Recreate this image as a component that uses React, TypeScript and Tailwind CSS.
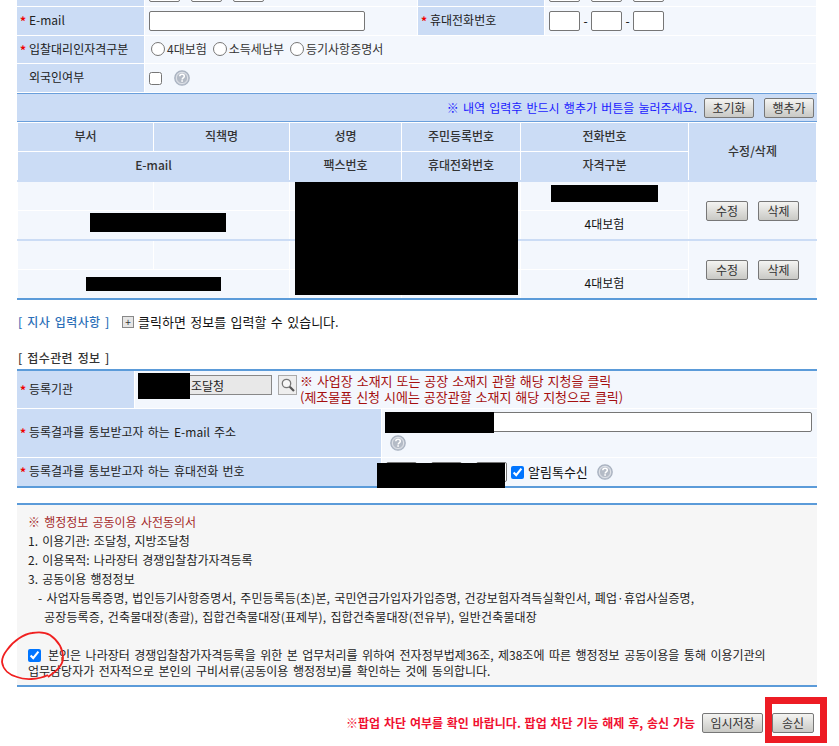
import type { ReactNode } from "react";

const font = "font-['Noto_Sans_CJK_KR','Liberation_Sans',sans-serif]";

function Star() {
  return <span className="absolute left-[3px] top-1/2 -translate-y-1/2 text-[12px] font-bold leading-none text-[#f00000]">*</span>;
}

function Label({ required, children, className = "" }: { required?: boolean; children?: ReactNode; className?: string }) {
  return (
    <div className={`relative flex items-center bg-[#cbdcf5] pb-[2px] pl-[12px] text-[#222] ${className}`}>
      {required && <Star />}
      {children}
    </div>
  );
}

function HeadCell({ children, className = "" }: { children: ReactNode; className?: string }) {
  return <div className={`flex items-center justify-center bg-[#cbdcf5] pb-[2px] ${className}`}>{children}</div>;
}

function TextBox({ className = "" }: { className?: string }) {
  return <div className={`h-[20px] rounded-[2px] border border-[#767676] bg-white ${className}`} />;
}

function Btn({ label, className = "" }: { label: string; className?: string }) {
  return (
    <button className={`h-[20px] rounded-[2px] border border-[#777] bg-linear-to-b from-[#f4f4f2] to-[#c9c9c5] text-[12px] leading-none text-[#333] ${className}`}>
      {label}
    </button>
  );
}

function Help({ className = "" }: { className?: string }) {
  return (
    <svg width="16" height="16" viewBox="0 0 16 16" className={`shrink-0 ${className}`}>
      <circle cx="8" cy="8" r="7.2" fill="#c6ccd6" stroke="#a9b2c0" strokeWidth="1.3" />
      <circle cx="8" cy="8" r="5.6" fill="#b4bbc6" stroke="#e6e9ee" strokeWidth="0.8" />
      <path d="M5.8 6.3c0-1.3 1-2 2.3-2s2.2.8 2.2 1.9c0 1.7-2.1 1.6-2.1 3.2" fill="none" stroke="#fff" strokeWidth="1.5" />
      <rect x="7.3" y="10.2" width="1.6" height="1.6" fill="#fff" />
    </svg>
  );
}

function Radio({ label }: { label: string }) {
  return (
    <label className="flex items-center gap-[2px]">
      <input type="radio" name="qualification" className="m-0 h-[14px] w-[14px]" />
      <span>{label}</span>
    </label>
  );
}

function Black({ className }: { className: string }) {
  return <div className={`absolute bg-black ${className}`} />;
}

function StaffRow() {
  return (
    <div className="grid h-[57px] grid-cols-[135px_135px_111px_118px_167px_127px] grid-rows-[28px_28px] gap-px bg-white">
      <div className="bg-[#f3f7fd]" />
      <div className="bg-[#f3f7fd]" />
      <div className="bg-[#f3f7fd]" />
      <div className="bg-[#f3f7fd]" />
      <div className="bg-[#f3f7fd]" />
      <div className="row-span-2 flex items-center justify-center gap-[10px] bg-[#f3f7fd]">
        <Btn label="수정" className="w-[42px]" />
        <Btn label="삭제" className="w-[41px]" />
      </div>
      <div className="col-span-2 bg-[#f3f7fd]" />
      <div className="bg-[#f3f7fd]" />
      <div className="bg-[#f3f7fd]" />
      <div className="flex items-center justify-center bg-[#f3f7fd] pb-[2px] text-[#111]">4대보험</div>
    </div>
  );
}

export default function App() {
  return (
    <div className="h-[746px] w-[839px] overflow-hidden bg-white">
      <div className={`relative ml-[17px] flow-root h-[746px] w-[800px] text-[12px] leading-[16px] [word-spacing:1.5px] ${font}`}>
        {/* applicant form, scrolled so the first row is cut off */}
        <div className="-mt-[22px] grid grid-cols-[127px_272px_126px_271px] grid-rows-[28px_28px_27px_28px] gap-px">
          <Label />
          <div className="flex items-center gap-[11px] bg-[#f3f7fd] pl-[4px]">
            <TextBox className="w-[31px]" />
            <TextBox className="w-[31px]" />
            <TextBox className="w-[31px]" />
          </div>
          <Label />
          <div className="flex items-center gap-[11px] bg-[#f3f7fd] pl-[4px]">
            <TextBox className="w-[31px]" />
            <TextBox className="w-[31px]" />
            <TextBox className="w-[31px]" />
          </div>

          <Label required>E-mail</Label>
          <div className="flex items-center bg-[#f3f7fd] pl-[4px]">
            <TextBox className="w-[216px]" />
          </div>
          <Label required>휴대전화번호</Label>
          <div className="flex items-center gap-[3px] bg-[#f3f7fd] pl-[4px]">
            <TextBox className="w-[31px]" />
            <span className="w-[5px] text-center">-</span>
            <TextBox className="w-[31px]" />
            <span className="w-[5px] text-center">-</span>
            <TextBox className="w-[31px]" />
          </div>

          <Label required>입찰대리인자격구분</Label>
          <div className="col-span-3 flex items-center gap-[6px] bg-[#f3f7fd] pb-[1px] pl-[6px] text-[#333]">
            <Radio label="4대보험" />
            <Radio label="소득세납부" />
            <Radio label="등기사항증명서" />
          </div>

          <Label>외국인여부</Label>
          <div className="col-span-3 flex items-center gap-[12px] bg-[#f3f7fd] pl-[4px]">
            <input type="checkbox" className="m-0 h-[13px] w-[13px]" />
            <Help />
          </div>
        </div>

        {/* notice bar */}
        <div className="mt-px flex h-[29px] items-center justify-end border-y border-[#6a9fdb] bg-[#cbdcf5] pr-[3px]">
          <span className="mr-[7px] text-[#1a1aff]">※ 내역 입력후 반드시 행추가 버튼을 눌러주세요.</span>
          <Btn label="초기화" className="mr-[10px] w-[50px]" />
          <Btn label="행추가" className="w-[50px]" />
        </div>

        {/* staff table */}
        <div className="relative ml-px">
          <div className="grid grid-cols-[135px_135px_111px_118px_167px_127px] grid-rows-[28px_28px] gap-px bg-white pt-px text-center font-medium text-[#333]">
            <HeadCell>부서</HeadCell>
            <HeadCell>직책명</HeadCell>
            <HeadCell>성명</HeadCell>
            <HeadCell>주민등록번호</HeadCell>
            <HeadCell>전화번호</HeadCell>
            <HeadCell className="row-span-2">수정/삭제</HeadCell>
            <HeadCell className="col-span-2">E-mail</HeadCell>
            <HeadCell>팩스번호</HeadCell>
            <HeadCell>휴대전화번호</HeadCell>
            <HeadCell>자격구분</HeadCell>
          </div>
          <div className="-ml-px h-[2px] bg-[#cbdcf5]" />
          <StaffRow />
          <div className="-ml-px h-[2px] bg-[#cbdcf5]" />
          <StaffRow />
          <div className="-ml-px h-[2px] bg-[#5b9bd9]" />
          <Black className="left-[72px] top-[91px] h-[19px] w-[136px]" />
          <Black className="left-[68px] top-[155px] h-[14px] w-[135px]" />
          <Black className="left-[277px] top-[60px] h-[113px] w-[223px]" />
          <Black className="left-[533px] top-[63px] h-[17px] w-[107px]" />
        </div>

        {/* branch section */}
        <div className="mt-[14px] flex items-center">
          <span className="ml-px w-[104px] font-medium tracking-[0.4px] text-[#2c6fb8]">[ 지사 입력사항 ]</span>
          <span className="flex h-[12px] w-[12px] items-center justify-center border border-[#888] bg-[#e6e6e6] text-[10px] leading-none text-[#333]">+</span>
          <span className="ml-[4px] text-[13px] text-[#111]">클릭하면 정보를 입력할 수 있습니다.</span>
        </div>

        {/* receipt info */}
        <div className="ml-px mt-[20px] font-medium tracking-[0.4px] text-[#333]">[ 접수관련 정보 ]</div>
        <div className="relative mt-[3px] border-y-[2px] border-[#5b9bd9]">
          <div className="flex h-[37px] gap-px">
            <Label required className="w-[117px]">등록기관</Label>
            <div className="flex flex-1 items-start bg-[#f3f7fd] pl-[3px] pt-[4px]">
              <div className="flex h-[20px] w-[134px] items-center border border-[#888] bg-[#e8e8e8] pl-[52px] pt-[2px] text-[#222]">조달청</div>
              <div className="ml-[6px] flex h-[20px] w-[19px] items-center justify-center border border-[#aaa] bg-[#eeeeee]">
                <svg width="16" height="16" viewBox="0 0 16 16">
                  <circle cx="6.5" cy="6.5" r="4.2" fill="#f7f7f7" stroke="#777" strokeWidth="1.3" />
                  <path d="M9.7 9.7L14 14" stroke="#555" strokeWidth="2.2" />
                </svg>
              </div>
              <div className="-mt-[2px] ml-[3px] text-[13px] leading-[16px] text-[#a50f0f] [word-spacing:1px]">
                <div>※ 사업장 소재지 또는 공장 소재지 관할 해당 지청을 클릭</div>
                <div>(제조물품 신청 시에는 공장관할 소재지 해당 지청으로 클릭)</div>
              </div>
            </div>
          </div>
          <div className="mt-px flex h-[48px] gap-px">
            <Label required className="w-[364px]">등록결과를 통보받고자 하는 E-mail 주소</Label>
            <div className="flex-1 bg-[#f3f7fd] pl-[3px] pt-[3px]">
              <TextBox className="w-[427px]" />
              <Help className="ml-[5px] mt-[3px]" />
            </div>
          </div>
          <div className="mt-px flex h-[28px] gap-px">
            <Label required className="w-[364px]">등록결과를 통보받고자 하는 휴대전화 번호</Label>
            <div className="flex flex-1 items-center bg-[#f3f7fd] pl-[4px]">
              <TextBox className="w-[31px]" />
              <TextBox className="ml-[14px] w-[31px]" />
              <TextBox className="ml-[14px] w-[31px]" />
              <input type="checkbox" defaultChecked className="m-0 ml-[4px] h-[13px] w-[13px]" />
              <span className="ml-[4px] text-[13px] text-[#111]">알림톡수신</span>
              <Help className="ml-[9px]" />
            </div>
          </div>
          <Black className="left-[121px] top-[2px] h-[26px] w-[52px]" />
          <Black className="left-[368px] top-[41px] h-[21px] w-[109px]" />
          <Black className="left-[360px] top-[92px] h-[25px] w-[128px]" />
        </div>

        {/* consent box */}
        <div className="relative mt-[15px] h-[184px] border-y-[2px] border-[#5b9bd9] bg-[#f6f6f6] pl-[11px] pt-[7px] text-[#222]">
          <div className="leading-[19px] text-[#a52a2a]">※ 행정정보 공동이용 사전동의서</div>
          <div className="leading-[19px]">1. 이용기관: 조달청, 지방조달청</div>
          <div className="leading-[19px]">2. 이용목적: 나라장터 경쟁입찰참가자격등록</div>
          <div className="leading-[19px]">3. 공동이용 행정정보</div>
          <div className="pl-[10px] leading-[19px] tracking-[0.1px]">- 사업자등록증명, 법인등기사항증명서, 주민등록등(초)본, 국민연금가입자가입증명, 건강보험자격득실확인서, 폐업·휴업사실증명,</div>
          <div className="pl-[16px] leading-[19px] tracking-[0.15px]">공장등록증, 건축물대장(총괄), 집합건축물대장(표제부), 집합건축물대장(전유부), 일반건축물대장</div>
          <div className="mt-[21px] flex items-center [word-spacing:1.8px]">
            <input type="checkbox" defaultChecked className="m-0 h-[13px] w-[13px]" />
            <span className="ml-[7px]">본인은 나라장터 경쟁입찰참가자격등록을 위한 본 업무처리를 위하여 전자정부법제36조, 제38조에 따른 행정정보 공동이용을 통해 이용기관의</span>
          </div>
          <div className="[word-spacing:1.8px]">업무담당자가 전자적으로 본인의 구비서류(공동이용 행정정보)를 확인하는 것에 동의합니다.</div>
        </div>

        {/* action row */}
        <div className="mt-[26px] flex items-center justify-end pr-[3px]">
          <span className="mr-[7px] font-bold text-[#f01030] [word-spacing:1.1px]">※팝업 차단 여부를 확인 바랍니다. 팝업 차단 기능 해제 후, 송신 가능</span>
          <Btn label="임시저장" className="w-[61px]" />
          <div className="relative ml-[9px]">
            <Btn label="송신" className="w-[42px]" />
            <div className="absolute -bottom-[10px] -left-[7px] -right-[13px] -top-[16px] border-[7px] border-[#ed1c24]" />
          </div>
        </div>

        {/* hand-drawn marker circle */}
        <svg width="70" height="55" viewBox="0 0 70 55" className="pointer-events-none absolute -left-[17px] top-[628px]">
          <path
            d="M48 49C55 44 63 38 63 30C63 22 60 14 50 7C45 4 38 4 32 5C24 6 13 13 7 22C3 27 2 31 2 34C3 42 10 47 17 49C24 52 38 52 48 47"
            fill="none"
            stroke="#f02020"
            strokeWidth="1.8"
          />
        </svg>
      </div>
    </div>
  );
}
